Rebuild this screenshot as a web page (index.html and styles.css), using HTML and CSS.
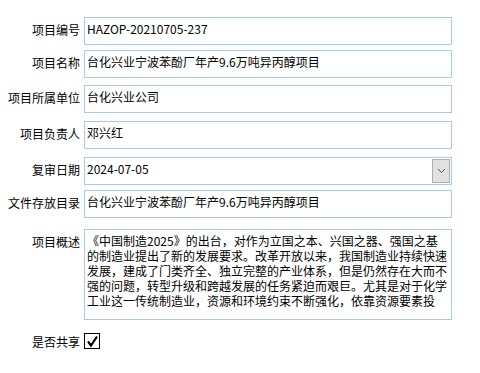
FILE: index.html
```html
<!DOCTYPE html>
<html>
<head>
  <meta charset="utf-8">
  <title>项目信息</title>
  <link rel="stylesheet" href="styles.css">
</head>
<body>
  <div class="form">
    <label class="label">项目编号</label>
    <input class="field" type="text" value="HAZOP-20210705-237">

    <label class="label">项目名称</label>
    <input class="field" type="text" value="台化兴业宁波苯酚厂年产9.6万吨异丙醇项目">

    <label class="label">项目所属单位</label>
    <input class="field" type="text" value="台化兴业公司">

    <label class="label">项目负责人</label>
    <input class="field" type="text" value="邓兴红">

    <label class="label">复审日期</label>
    <div class="field combo">
      <span>2024-07-05</span>
      <span class="drop">
        <svg width="9" height="6" viewBox="0 0 9 6"><path d="M1 1 L4.5 4.5 L8 1" fill="none" stroke="#555" stroke-width="1"/></svg>
      </span>
    </div>

    <label class="label">文件存放目录</label>
    <input class="field" type="text" value="台化兴业宁波苯酚厂年产9.6万吨异丙醇项目">

    <label class="label">项目概述</label>
    <div class="field memo">
      《中国制造2025》的出台，对作为立国之本、兴国之器、强国之基<br>
      的制造业提出了新的发展要求。改革开放以来，我国制造业持续快速<br>
      发展，建成了门类齐全、独立完整的产业体系，但是仍然存在大而不<br>
      强的问题，转型升级和跨越发展的任务紧迫而艰巨。尤其是对于化学<br>
      工业这一传统制造业，资源和环境约束不断强化，依靠资源要素投
    </div>

    <label class="label label-check">是否共享</label>
    <div>
      <span class="check">
        <svg width="13" height="13" viewBox="0 0 13 13"><path d="M2 6.5 L5 10.5 L11 1.5" fill="none" stroke="#000" stroke-width="2.2"/></svg>
      </span>
    </div>
  </div>
</body>
</html>
```

FILE: styles.css
```css
body {
  margin: 0;
  background: #fff;
  font-family: "Noto Sans CJK SC", "Noto Sans", sans-serif;
  font-size: 12px;
  color: #000;
}

.form {
  display: grid;
  grid-template-columns: 80px 368px;
  grid-template-rows: 33px 35px 36px 36px 33px 39px 104px auto;
  column-gap: 4px;
  align-items: start;
  padding-top: 17px;
}

.label {
  text-align: right;
  line-height: 25px;
  white-space: nowrap;
}

.label-check {
  line-height: 17px;
}

.field {
  box-sizing: border-box;
  height: 28px;
  margin: 0;
  padding: 0 2px 6px 2px;
  border: 1px solid #a9c9ee;
  border-radius: 0;
  background: #fff;
  font-family: inherit;
  font-size: 12px;
  color: #000;
  outline: none;
}

.combo {
  display: flex;
  align-items: center;
  justify-content: space-between;
  padding: 0 1px 0 2px;
}

.combo span:first-child {
  margin-top: -6px;
}

.drop {
  box-sizing: border-box;
  width: 18px;
  height: 24px;
  border: 1px solid #adadad;
  background: #e1e1e1;
  display: flex;
  align-items: center;
  justify-content: center;
}

.memo {
  height: 91px;
  padding: 3px 2px;
  line-height: 15px;
  overflow: hidden;
  white-space: nowrap;
}

.check {
  box-sizing: border-box;
  width: 16px;
  height: 16px;
  border: 1px solid #000;
  display: flex;
  align-items: center;
  justify-content: center;
}
```
